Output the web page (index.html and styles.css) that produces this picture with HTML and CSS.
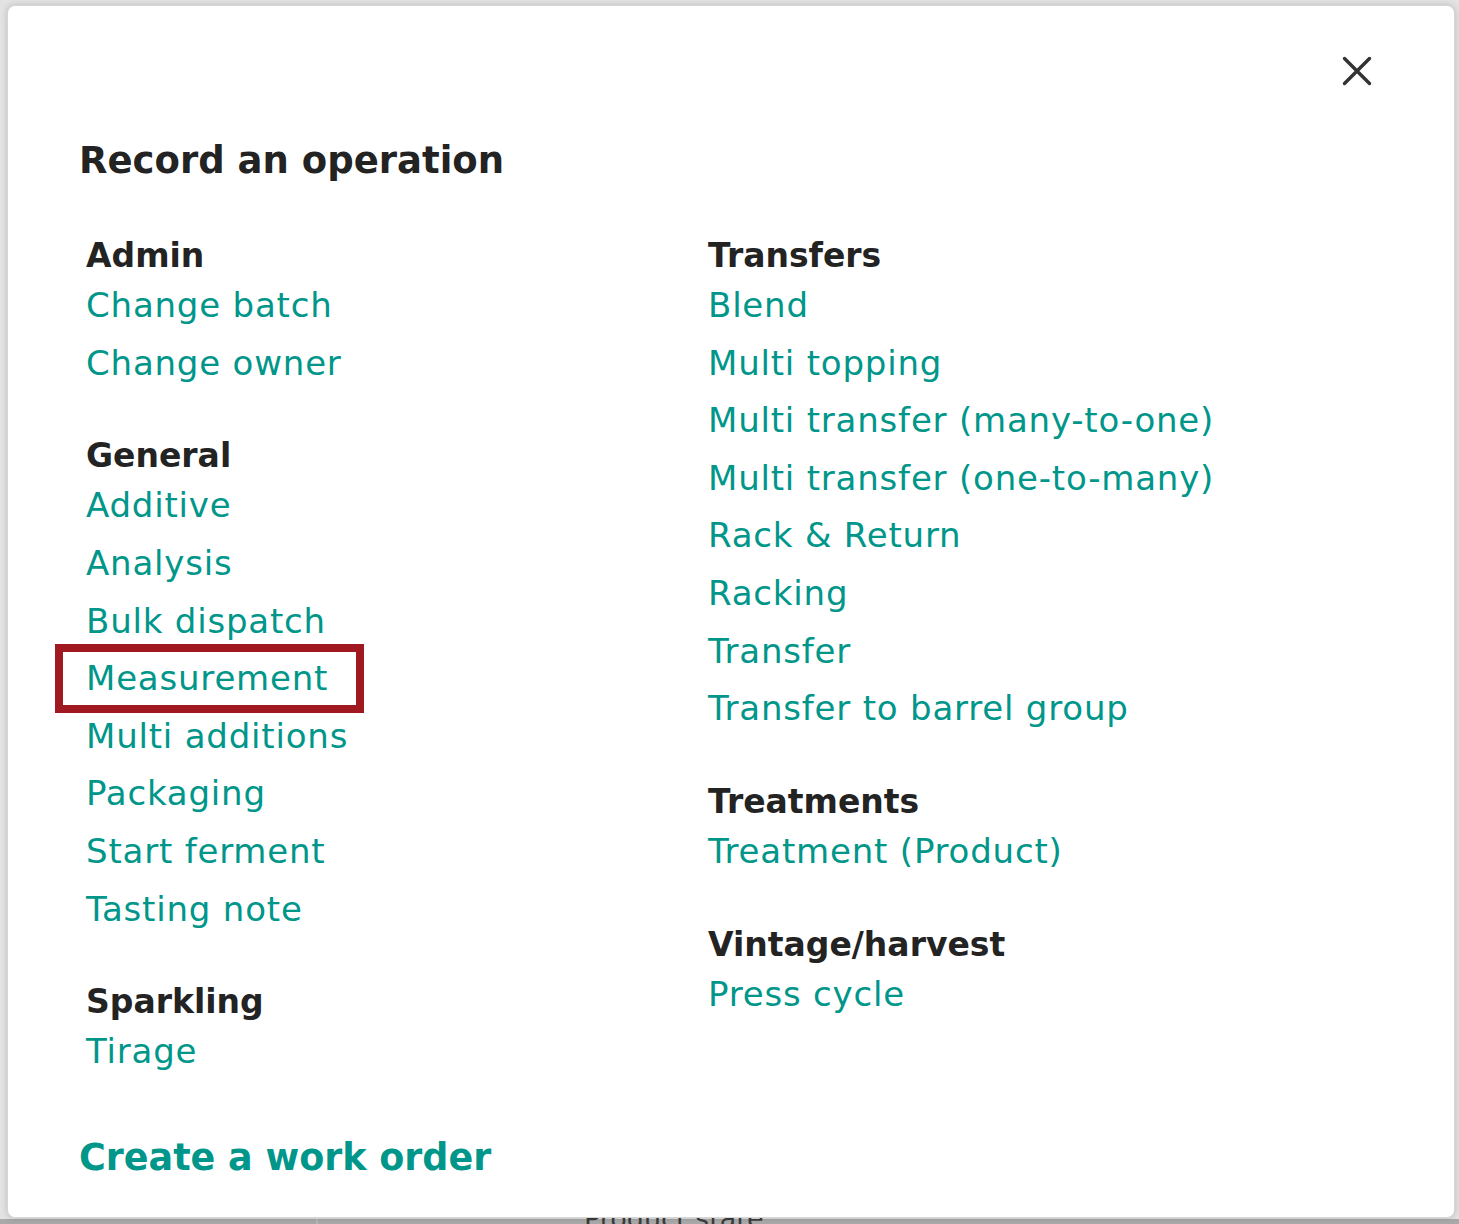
FILE: index.html
```
<!DOCTYPE html>
<html lang="en">
<head>
<meta charset="utf-8">
<title>Record an operation</title>
<link rel="stylesheet" href="styles.css">
</head>
<body>
<div class="modal">
  <div class="modal-bar">
    <button class="close" aria-label="Close">
      <svg width="30" height="30" viewBox="0 0 30 30"><path d="M2.5 2.5 L27.5 27.5 M27.5 2.5 L2.5 27.5" stroke="#333" stroke-width="3.4" stroke-linecap="round" fill="none"/></svg>
    </button>
  </div>
  <h1 class="title">Record an operation</h1>
  <div class="columns">
    <div class="col">
      <section class="group">
        <h2 class="group-title">Admin</h2>
        <ul class="links">
          <li><a class="link" href="#">Change batch</a></li>
          <li><a class="link" href="#">Change owner</a></li>
        </ul>
      </section>
      <section class="group">
        <h2 class="group-title">General</h2>
        <ul class="links">
          <li><a class="link" href="#">Additive</a></li>
          <li><a class="link" href="#">Analysis</a></li>
          <li><a class="link" href="#">Bulk dispatch</a></li>
          <li><a class="link highlight" href="#">Measurement</a></li>
          <li><a class="link" href="#">Multi additions</a></li>
          <li><a class="link" href="#">Packaging</a></li>
          <li><a class="link" href="#">Start ferment</a></li>
          <li><a class="link" href="#">Tasting note</a></li>
        </ul>
      </section>
      <section class="group">
        <h2 class="group-title">Sparkling</h2>
        <ul class="links">
          <li><a class="link" href="#">Tirage</a></li>
        </ul>
      </section>
    </div>
    <div class="col">
      <section class="group">
        <h2 class="group-title">Transfers</h2>
        <ul class="links">
          <li><a class="link" href="#">Blend</a></li>
          <li><a class="link" href="#">Multi topping</a></li>
          <li><a class="link" href="#">Multi transfer (many-to-one)</a></li>
          <li><a class="link" href="#">Multi transfer (one-to-many)</a></li>
          <li><a class="link" href="#">Rack &amp; Return</a></li>
          <li><a class="link" href="#">Racking</a></li>
          <li><a class="link" href="#">Transfer</a></li>
          <li><a class="link" href="#">Transfer to barrel group</a></li>
        </ul>
      </section>
      <section class="group">
        <h2 class="group-title">Treatments</h2>
        <ul class="links">
          <li><a class="link" href="#">Treatment (Product)</a></li>
        </ul>
      </section>
      <section class="group">
        <h2 class="group-title">Vintage/harvest</h2>
        <ul class="links">
          <li><a class="link" href="#">Press cycle</a></li>
        </ul>
      </section>
    </div>
  </div>
  <a class="work-order" href="#">Create a work order</a>
</div>
<div class="backdrop-row">
  <div class="backdrop-cell first"></div>
  <div class="backdrop-cell second"><span class="backdrop-text">Product state</span></div>
</div>
</body>
</html>
```
FILE: styles.css
```
*, *::before, *::after { box-sizing: border-box; }
html, body {
  margin: 0;
  padding: 0;
}
body {
  height: 1224px;
  overflow: hidden;
  background: #e3e3e3;
  font-family: "DejaVu Sans", "Liberation Sans", sans-serif;
  display: flex;
  flex-direction: column;
}
.modal {
  margin: 5px 4px 0 7px;
  background: #fff;
  border: 1px solid #d6d6d6;
  border-radius: 8px;
  box-shadow: 0 0 6px rgba(0,0,0,0.18);
  padding: 45px 73px 34px 71px;
  display: flex;
  flex-direction: column;
  position: relative;
  z-index: 1;
}
.modal-bar {
  height: 40px;
  display: flex;
  justify-content: flex-end;
  padding-right: 4px;
}
.close {
  width: 40px;
  height: 40px;
  padding: 0;
  border: 0;
  background: transparent;
  display: flex;
  align-items: center;
  justify-content: center;
  cursor: pointer;
}
.title {
  margin: 45px 0 0 0;
  font-size: 37px;
  line-height: 50px;
  font-weight: bold;
  color: #232323;
}
.columns {
  margin-top: 49px;
  padding-left: 7px;
  display: grid;
  grid-template-columns: 622px 1fr;
}
.col {
  display: flex;
  flex-direction: column;
  gap: 43.2px;
}
.group-title {
  margin: 0;
  font-size: 33px;
  line-height: 42px;
  font-weight: bold;
  color: #232323;
}
.links {
  list-style: none;
  margin: 0;
  padding: 0;
}
.links li {
  height: 57.6px;
  line-height: 57.6px;
}
.link {
  display: inline-block;
  position: relative;
  font-size: 34px;
  letter-spacing: 0.8px;
  color: #00968a;
  text-decoration: none;
}
.highlight::after {
  content: "";
  position: absolute;
  left: -31px;
  top: -6px;
  width: 309px;
  height: 69px;
  border: 8px solid #a01920;
}
.work-order {
  margin-top: 52px;
  font-size: 36.5px;
  line-height: 50px;
  font-weight: bold;
  color: #00968a;
  text-decoration: none;
  align-self: flex-start;
}
.backdrop-row {
  flex: 1;
  background: #a9a9a9;
  display: flex;
  margin-top: 1px;
}
.backdrop-cell.first {
  width: 318px;
  border-right: 2px solid #b8b8b8;
}
.backdrop-cell.second {
  position: relative;
  flex: 1;
}
.backdrop-text {
  position: absolute;
  left: 266px;
  top: -16px;
  font-size: 27px;
  color: #3c3c3c;
  white-space: nowrap;
}
```
